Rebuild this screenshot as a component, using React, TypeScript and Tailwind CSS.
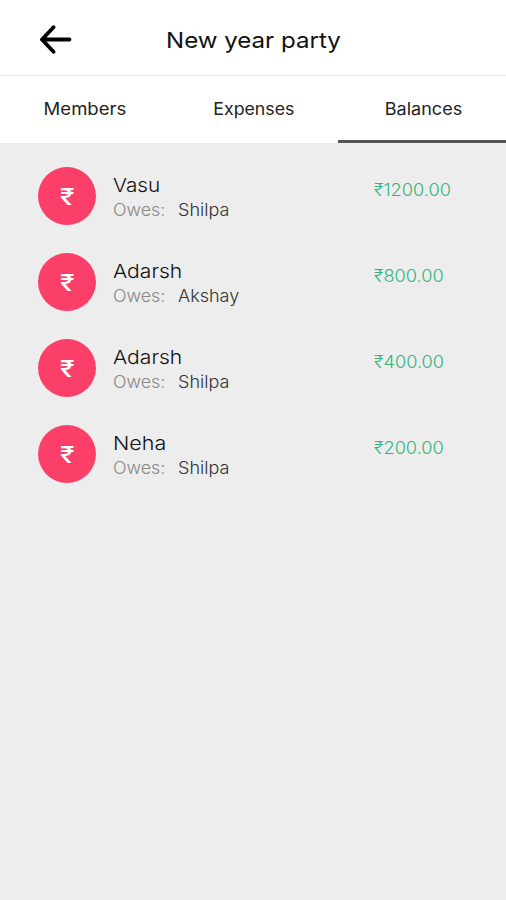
import React from "react";
import clsx from "clsx";

interface Balance {
    from: string;
    to: string;
    amount: string;
    stretch: string;
}

const tabs = [
    { label: "Members", stretch: "scale-x-[1.09]" },
    { label: "Expenses", stretch: "scale-x-[1.045]" },
    { label: "Balances", stretch: "scale-x-[1.06]" },
];

const balances: Balance[] = [
    { from: "Vasu", to: "Shilpa", amount: "1200.00", stretch: "scale-x-[1.09]" },
    { from: "Adarsh", to: "Akshay", amount: "800.00", stretch: "scale-x-[1.11]" },
    { from: "Adarsh", to: "Shilpa", amount: "400.00", stretch: "scale-x-[1.11]" },
    { from: "Neha", to: "Shilpa", amount: "200.00", stretch: "scale-x-[1.13]" },
];

function Header() {
    return (
        <header className="flex items-center h-[76px] bg-white border-b border-[#ebebeb] pl-[39px] pt-[4px]">
            <svg
                className="w-[33px] h-[30px]"
                viewBox="0 0 33 30"
                fill="none"
                stroke="#000"
                strokeWidth="3.8"
                strokeLinecap="round"
                strokeLinejoin="round"
            >
                <path d="M3 14.5H30.5M14.5 2.2L3 14.5L14.5 26.8" />
            </svg>
            <h1 className="ml-[94px] pt-[2px] origin-left scale-x-[1.095] text-[22px] text-[#111]">New year party</h1>
        </header>
    );
}

function BalanceRow({ from, to, amount, stretch }: Balance) {
    return (
        <div className="flex h-[58px]">
            <div className="flex items-center justify-center size-[58px] rounded-full bg-[#fc3f68] text-white text-[23px] font-medium pt-[2px]">
                <span className="scale-x-[1.15]">₹</span>
            </div>
            <div className="ml-[17px] w-[260px] pt-[6px]">
                <div className={clsx("origin-left text-[19px] leading-[25px] font-light text-[#111]", stretch)}>
                    {from}
                </div>
                <div className="flex text-[17px] leading-[24px] font-light">
                    <span className="w-[65px] origin-left scale-x-[1.05] text-[#888]">Owes:</span>
                    <span className="origin-left scale-x-[1.06] text-[#333]">{to}</span>
                </div>
            </div>
            <div className="ml-px pt-[11px] origin-left scale-x-[1.07] text-[#34b57c] text-[17px] font-[350]">
                ₹{amount}
            </div>
        </div>
    );
}

export default function App() {
    return (
        <div className="flex flex-col h-[900px] w-[506px] bg-[#ededed] font-['Inter','Noto_Sans',sans-serif]">
            <Header />
            <nav className="grid grid-cols-[168px_170px_168px] h-[67px] bg-white text-[17px] text-center text-[#222]">
                {tabs.map(({ label, stretch }) => (
                    <span
                        key={label}
                        className={clsx(
                            "h-[67px] pl-[2px] leading-[66px]",
                            label === "Balances" && "border-b-3 border-[#555]",
                        )}
                    >
                        <span className={clsx("inline-block", stretch)}>{label}</span>
                    </span>
                ))}
            </nav>
            <main className="flex flex-col gap-7 pt-6 px-[38px]">
                {balances.map((balance, i) => (
                    <BalanceRow key={i} {...balance} />
                ))}
            </main>
        </div>
    );
}
